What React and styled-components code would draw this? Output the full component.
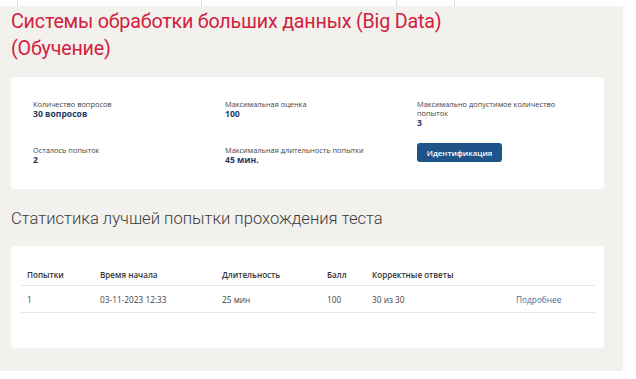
import React from 'react'
import styled, { createGlobalStyle } from 'styled-components'

const GlobalStyle = createGlobalStyle`
    body {
        margin: 0;
        background: #fff;
        font-family: "Open Sans", "Noto Sans", sans-serif;
    }
`

const info = [
    { label: 'Количество вопросов', value: '30 вопросов' },
    { label: 'Максимальная оценка', value: '100' },
    { label: 'Максимально допустимое количество попыток', value: '3' },
    { label: 'Осталось попыток', value: '2' },
    { label: 'Максимальная длительность попытки', value: '45 мин.' },
]

const columns = [
    { title: 'Попытки', width: 73 },
    { title: 'Время начала', width: 122 },
    { title: 'Длительность', width: 105 },
    { title: 'Балл', width: 45 },
    { title: 'Корректные ответы', width: 144 },
    { title: '', width: 'auto' },
]

const attempts = [
    { n: '1', start: '03-11-2023 12:33', duration: '25 мин', score: '100', correct: '30 из 30' },
]

const App = () => {
    return (
        <>
            <GlobalStyle />
            <Tabs>
                <Tab width={18} />
                <Tab width={184} />
                <Tab width={195} />
                <Tab width={58} />
            </Tabs>
            <Page>
                <Title>Системы обработки больших данных (Big Data) (Обучение)</Title>
                <InfoCard>
                    {info.map((item) => (
                        <InfoItem key={item.label}>
                            <Label>{item.label}</Label>
                            <Value>{item.value}</Value>
                        </InfoItem>
                    ))}
                    <InfoItem>
                        <Button>Идентификация</Button>
                    </InfoItem>
                </InfoCard>
                <Heading>Статистика лучшей попытки прохождения теста</Heading>
                <TableCard>
                    <Table>
                        <colgroup>
                            {columns.map((c, i) => <col key={i} style={{ width: c.width }} />)}
                        </colgroup>
                        <thead>
                            <tr>
                                {columns.map((c, i) => <Th key={i}>{c.title}</Th>)}
                            </tr>
                        </thead>
                        <tbody>
                            {attempts.map((a) => (
                                <tr key={a.n}>
                                    <Td>{a.n}</Td>
                                    <Td>{a.start}</Td>
                                    <Td>{a.duration}</Td>
                                    <Td>{a.score}</Td>
                                    <Td>{a.correct}</Td>
                                    <Td><Link href="#">Подробнее</Link></Td>
                                </tr>
                            ))}
                        </tbody>
                    </Table>
                </TableCard>
            </Page>
        </>
    )
}

const Tabs = styled.div`
    display: flex;
    height: 6px;
`

const Tab = styled.div`
    width: ${props => props.width}px;
    border-right: 1px solid #dcdcdc;
    box-sizing: border-box;
`

const Page = styled.div`
    width: 623px;
    box-sizing: border-box;
    background: #f2f1ee;
    padding: 2px 19px 23px 11px;
`

const Title = styled.h1`
    margin: 0;
    width: 460px;
    font-family: "Roboto", "Noto Sans", sans-serif;
    font-size: 19.7px;
    line-height: 27px;
    font-weight: 400;
    color: #d2213d;
    letter-spacing: -0.2px;
`

const InfoCard = styled.div`
    margin-top: 15px;
    background: #fff;
    border-radius: 3px;
    padding: 23px 0 23px 22px;
    display: grid;
    grid-template-columns: 192px 192px 150px;
    row-gap: 17px;
    align-items: start;
`

const InfoItem = styled.div`
    display: flex;
    flex-direction: column;
`

const Label = styled.div`
    font-size: 7.4px;
    line-height: 9px;
    color: #444;
`

const Value = styled.div`
    font-size: 8.6px;
    line-height: 11px;
    font-weight: 700;
    color: #1e3a5f;
`

const Button = styled.button`
    align-self: flex-start;
    width: 85px;
    height: 19px;
    margin-top: -3px;
    padding: 0;
    border: none;
    border-radius: 3px;
    background: #1d5489;
    color: #fff;
    font-family: "Open Sans", "Noto Sans", sans-serif;
    font-size: 7.9px;
    font-weight: 600;
`

const Heading = styled.h2`
    margin: 19px 0 16px;
    font-family: "Roboto", "Noto Sans", sans-serif;
    font-size: 16.6px;
    line-height: 22px;
    font-weight: 300;
    color: #3a3a3a;
`

const TableCard = styled.div`
    background: #fff;
    border-radius: 3px;
    padding: 17px 9px 35px 10px;
`

const Table = styled.table`
    width: 100%;
    border-collapse: collapse;
    table-layout: fixed;
`

const Th = styled.th`
    text-align: left;
    padding: 0 0 0 6px;
    height: 22px;
    font-size: 8.1px;
    font-weight: 600;
    color: #333;
    border-bottom: 1px solid #e6e6e6;
`

const Td = styled.td`
    padding: 0 0 0 6px;
    height: 26px;
    font-size: 8.3px;
    color: #444;
    border-bottom: 1px solid #e6e6e6;
`

const Link = styled.a`
    color: #3f6c9a;
    text-decoration: none;
`

export default App
